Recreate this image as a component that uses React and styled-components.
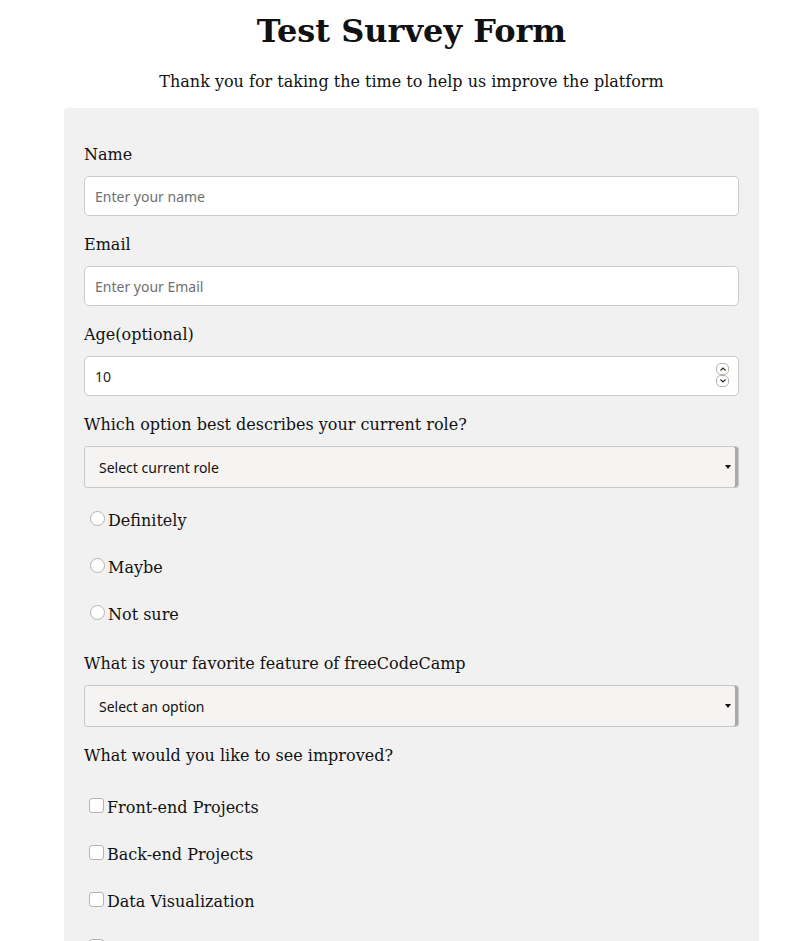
import React from 'react'
import styled, { createGlobalStyle } from 'styled-components'

const GlobalStyle = createGlobalStyle`
  body {
    margin: 0;
    background: #fff;
    font-family: "DejaVu Serif", serif;
    color: #111;
  }
`

const Page = styled.main`
  padding: 0 34px 0 64px;
`

const Title = styled.h1`
  margin: 0;
  padding-top: 11px;
  font-size: 32px;
  line-height: 40px;
  text-align: center;
  font-weight: bold;
`

const Subtitle = styled.p`
  margin: 20px 0 15px;
  font-size: 16px;
  line-height: 22px;
  text-align: center;
`

const Form = styled.form`
  background: #f1f1f1;
  border-radius: 4px;
  padding: 37px 20px 40px;
`

const Group = styled.div`
  margin-bottom: ${p => p.$after || 19}px;
`

const Label = styled.label`
  display: block;
  font-size: 16px;
  line-height: 20px;
  margin-bottom: ${p => p.$gap || 11}px;
`

const TextInput = styled.input`
  display: block;
  box-sizing: border-box;
  width: 100%;
  height: 40px;
  padding: 0 10px;
  border: 1px solid #cbcbcb;
  border-radius: 5px;
  background: #fff;
  font-family: "Noto Sans", sans-serif;
  font-size: 14px;
  color: #222;
  outline: none;
  &::placeholder { color: #6f6f6f; }
`

const NumberWrap = styled.div`
  position: relative;
`

const Spinner = styled.div`
  position: absolute;
  right: 10px;
  top: 7px;
  display: flex;
  flex-direction: column;
`

const SpinBtn = styled.span`
  width: 13px;
  height: 12px;
  box-sizing: border-box;
  border: 1px solid #b9b2aa;
  border-radius: 5px;
  display: flex;
  align-items: center;
  justify-content: center;
  background: #fff;
`

const SelectWrap = styled.div`
  position: relative;
  margin-bottom: ${p => p.$after || 0}px;
`

const Select = styled.select`
  display: block;
  box-sizing: border-box;
  width: 100%;
  height: 42px;
  padding: 0 14px;
  appearance: none;
  border: 1px solid #c9c9c9;
  border-radius: 3px;
  background: #f5f4f2;
  box-shadow: inset -3px 0 0 #a9a9a9;
  font-family: "Noto Sans", sans-serif;
  font-size: 14px;
  color: #111;
`

const Arrow = styled.span`
  position: absolute;
  right: 8px;
  top: 19px;
  width: 0;
  height: 0;
  border-left: 3.5px solid transparent;
  border-right: 3.5px solid transparent;
  border-top: 4px solid #111;
  pointer-events: none;
`

const Option = styled.div`
  display: flex;
  align-items: center;
  height: 47px;
  font-size: 16px;
  span {
    position: relative;
    top: 2px;
  }
`

const Box = styled.input`
  appearance: none;
  margin: 0 3px 0 ${p => (p.type === 'radio' ? 6 : 5)}px;
  width: 15px;
  height: 15px;
  box-sizing: border-box;
  border: 1px solid #bab3aa;
  border-radius: ${p => (p.type === 'radio' ? '50%' : '3px')};
  background: #fff;
`

const Chevron = ({ up }) => (
  <svg width="6" height="4" viewBox="0 0 6 4">
    <path d={up ? 'M0.5 3.5 L3 1 L5.5 3.5' : 'M0.5 0.5 L3 3 L5.5 0.5'} fill="none" stroke="#222" strokeWidth="1.1" />
  </svg>
)

function Radio({ label }) {
  return (
    <Option>
      <Box type="radio" name="recommend" />
      <span>{label}</span>
    </Option>
  )
}

function Check({ label }) {
  return (
    <Option>
      <Box type="checkbox" />
      <span>{label}</span>
    </Option>
  )
}

export default function App() {
  return (
    <>
      <GlobalStyle />
      <Page>
        <Title>Test Survey Form</Title>
        <Subtitle>Thank you for taking the time to help us improve the platform</Subtitle>
        <Form>
          <Group>
            <Label>Name</Label>
            <TextInput placeholder="Enter your name" />
          </Group>
          <Group>
            <Label>Email</Label>
            <TextInput placeholder="Enter your Email" />
          </Group>
          <Group>
            <Label>Age(optional)</Label>
            <NumberWrap>
              <TextInput defaultValue="10" />
              <Spinner>
                <SpinBtn><Chevron up /></SpinBtn>
                <SpinBtn><Chevron /></SpinBtn>
              </Spinner>
            </NumberWrap>
          </Group>
          <Group $after={18}>
            <Label>Which option best describes your current role?</Label>
            <SelectWrap $after={7}>
              <Select defaultValue="">
                <option value="">Select current role</option>
                <option>Student</option>
                <option>Full time job</option>
                <option>Prefer not to say</option>
              </Select>
              <Arrow />
            </SelectWrap>
            <Radio label="Definitely" />
            <Radio label="Maybe" />
            <Radio label="Not sure" />
          </Group>
          <Group $after={19}>
            <Label>What is your favorite feature of freeCodeCamp</Label>
            <SelectWrap>
              <Select defaultValue="">
                <option value="">Select an option</option>
                <option>Challenges</option>
                <option>Projects</option>
                <option>Community</option>
              </Select>
              <Arrow />
            </SelectWrap>
          </Group>
          <Group>
            <Label $gap={16}>What would you like to see improved?</Label>
            <Check label="Front-end Projects" />
            <Check label="Back-end Projects" />
            <Check label="Data Visualization" />
            <Check label="Challenges" />
          </Group>
        </Form>
      </Page>
    </>
  )
}
